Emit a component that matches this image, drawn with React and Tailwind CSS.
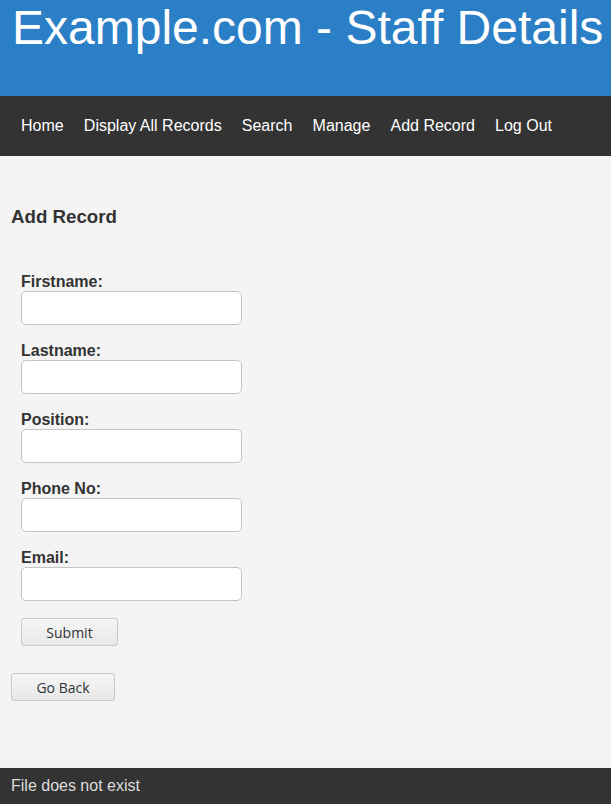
import React from 'react';

const links = ['Home', 'Display All Records', 'Search', 'Manage', 'Add Record', 'Log Out'];
const fields = ['Firstname:', 'Lastname:', 'Position:', 'Phone No:', 'Email:'];

function Btn({ children, className = '' }) {
    return (
        <button
            type="button"
            className={`h-[28px] rounded-[3px] border border-[#c8c8c8] bg-gradient-to-b from-[#f6f6f6] to-[#e8e8e8] text-[14px] text-[#2e3436] [font-family:'Open_Sans',sans-serif] ${className}`}
        >
            {children}
        </button>
    );
}

export default function App() {
    return (
        <div className="min-h-screen flex flex-col bg-[#f4f4f4] [font-family:'Liberation_Sans',Arial,sans-serif]">
            <header className="h-[96px] bg-[#2b7fc6] pl-[12px]">
                <h1 className="text-[48px] leading-[55px] text-white">Example.com - Staff Details</h1>
            </header>

            <nav className="h-[60px] bg-[#333333] flex items-center pl-[11px]">
                {links.map((l) => (
                    <a key={l} className="px-[10.05px] text-[16px] leading-[18px] text-white">{l}</a>
                ))}
            </nav>

            <main className="flex-1 px-[11px] pt-[50px]">
                <h3 className="text-[18.72px] leading-[21px] font-bold text-[#333]">Add Record</h3>

                <form className="pl-[10px] mt-[46px]">
                    {fields.map((f) => (
                        <div key={f} className="mb-[17px] last:mb-[15px]">
                            <label className="block text-[16px] leading-[18px] font-bold text-[#333]">{f}</label>
                            <input
                                type="text"
                                className="block w-[221px] h-[34px] rounded-[5px] border border-[#c4c4c4] bg-white"
                            />
                        </div>
                    ))}
                    <Btn className="w-[97px]">Submit</Btn>
                </form>

                <Btn className="mt-[27px] w-[104px]">Go Back</Btn>
            </main>

            <footer className="h-[36px] bg-[#333333] flex items-center px-[11px]">
                <p className="text-[16px] leading-[18px] text-[#dddddd]">File does not exist</p>
            </footer>
        </div>
    );
}
